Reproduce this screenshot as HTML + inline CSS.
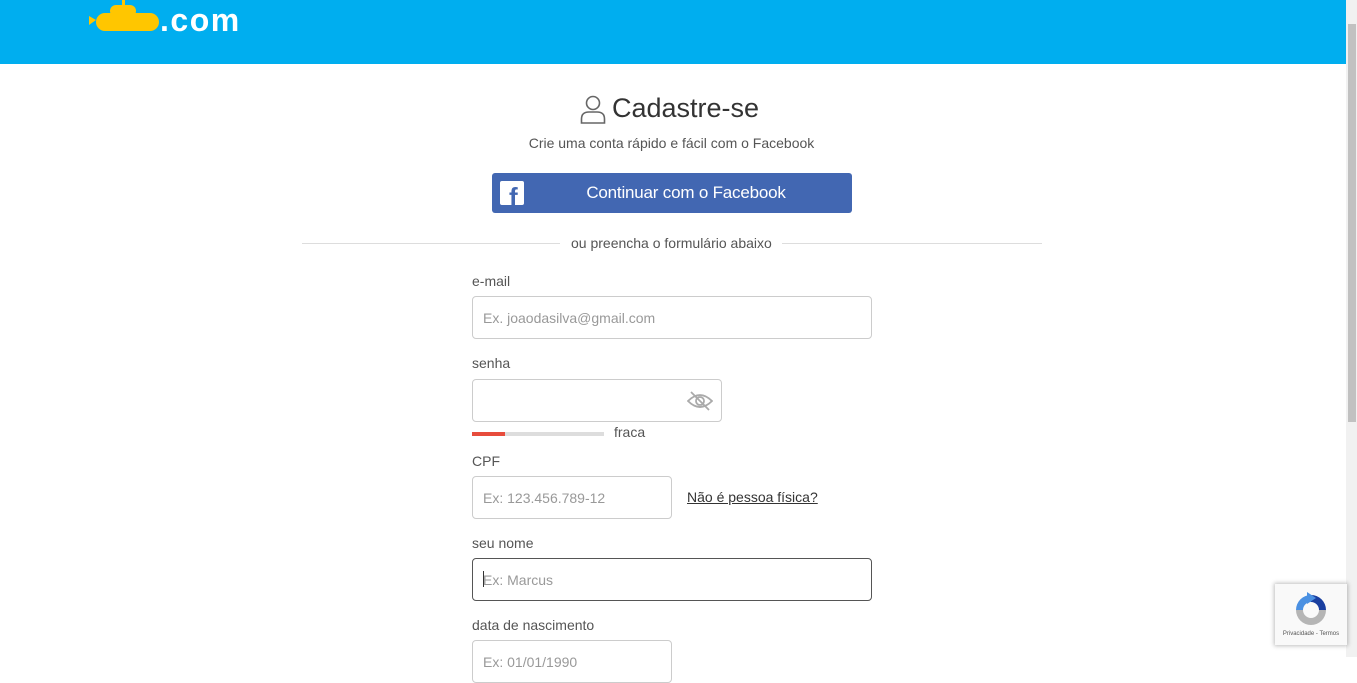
<!DOCTYPE html>
<html><head><meta charset="utf-8"><style>
*{box-sizing:border-box;margin:0;padding:0}
body{width:1357px;height:657px;overflow:hidden;background:#fff;font-family:"Liberation Sans",Arial,sans-serif;color:#555;position:relative}
.hdr{position:absolute;left:0;top:0;width:1346px;height:64px;background:#00aeef}
.sb{position:absolute;left:1346px;top:0;width:11px;height:657px;background:#f1f1f1}
.thumb{position:absolute;left:1348px;top:24px;width:8px;height:398px;background:#c1c1c1}
.abs{position:absolute}
.lbl{position:absolute;left:472px;font-size:14px;color:#555}
.inp{position:absolute;left:472px;border:1px solid #ccc;border-radius:4px;height:43px;font-size:14px;color:#999;padding:13px 10px;overflow:hidden}
</style></head><body>
<div class="hdr">
<svg class="abs" style="left:86px;top:0" width="76" height="34" viewBox="0 0 76 34">
<rect x="36" y="0" width="3" height="8" fill="#ffc600"/>
<rect x="24" y="5" width="26" height="12" rx="6" fill="#ffc600"/>
<rect x="10" y="13" width="63" height="18" rx="9" fill="#ffc600"/>
<path d="M3 16 L10 20 L3 25 Z" fill="#ffc600"/>
</svg>
<div class="abs" style="left:160px;top:1px;font-size:32px;font-weight:bold;color:#fff;line-height:38px;letter-spacing:1.5px">.com</div>
</div>
<div class="sb"></div><div class="thumb"></div>
<svg class="abs" style="left:580px;top:95px" width="26" height="29" viewBox="0 0 26 29" fill="none" stroke="#666" stroke-width="1.6"><circle cx="13" cy="8" r="6.5"/><path d="M1.5 28 V24 Q1.5 17 9 17 H17 Q24.5 17 24.5 24 V28 Z"/></svg>
<div class="abs" style="left:612px;top:93px;font-size:27px;color:#333">Cadastre-se</div>
<div class="abs" style="left:0;width:1343px;text-align:center;top:135px;font-size:14px;color:#555">Crie uma conta rápido e fácil com o Facebook</div>
<div class="abs" style="left:492px;top:173px;width:360px;height:40px;background:#4267b2;border-radius:3px">
<div class="abs" style="left:8px;top:8px;width:24px;height:24px;background:#fff;border-radius:2px;overflow:hidden"><div class="abs" style="left:9px;top:4px;font-size:26px;font-weight:bold;color:#4267b2;line-height:24px">f</div></div>
<div class="abs" style="left:0;width:388px;text-align:center;top:10px;font-size:17px;color:#fff;letter-spacing:-0.2px">Continuar com o Facebook</div>
</div>
<div class="abs" style="left:302px;top:243px;width:258px;height:1px;background:#ddd"></div>
<div class="abs" style="left:782px;top:243px;width:260px;height:1px;background:#ddd"></div>
<div class="abs" style="left:571px;top:235px;font-size:14px;color:#555">ou preencha o formulário abaixo</div>
<div class="lbl" style="top:273px">e-mail</div>
<div class="inp" style="top:296px;width:400px">Ex. joaodasilva@gmail.com</div>
<div class="lbl" style="top:355px">senha</div>
<div class="inp" style="top:379px;width:250px"></div>
<svg class="abs" style="left:687px;top:389px" width="26" height="24" viewBox="0 0 26 24" fill="none" stroke="#aaa" stroke-width="1.8"><path d="M1 12 Q13 0 25 12 Q13 24 1 12 Z"/><circle cx="13" cy="12" r="4"/><path d="M4 3 L22 21"/></svg>
<div class="abs" style="left:472px;top:432px;width:132px;height:4px;background:#ddd"></div>
<div class="abs" style="left:472px;top:432px;width:33px;height:4px;background:#e74c3c"></div>
<div class="abs" style="left:614px;top:424px;font-size:14px;color:#555">fraca</div>
<div class="lbl" style="top:453px">CPF</div>
<div class="inp" style="top:476px;width:200px">Ex: 123.456.789-12</div>
<div class="abs" style="left:687px;top:489px;font-size:14px;color:#333;text-decoration:underline">Não é pessoa física?</div>
<div class="lbl" style="top:535px">seu nome</div>
<div class="inp" style="top:558px;width:400px;border-color:#555">Ex: Marcus</div>
<div class="abs" style="left:483px;top:571px;width:1px;height:16px;background:#333"></div>
<div class="lbl" style="top:617px">data de nascimento</div>
<div class="inp" style="top:640px;width:200px">Ex: 01/01/1990</div>
<div class="abs" style="left:1275px;top:584px;width:72px;height:61px;background:#f9f9f9;box-shadow:0 0 4px 1px rgba(0,0,0,.25)">
<svg class="abs" style="left:17px;top:7px" width="38" height="38" viewBox="0 0 38 38"><path d="M19 4 A15 15 0 0 0 4 19 H11 A8 8 0 0 1 19 11 Z" fill="#4a90e2"/><path d="M19 4 A15 15 0 0 1 34 19 H27 A8 8 0 0 0 19 11 Z" fill="#1a3fa0"/><path d="M4 19 A15 15 0 0 0 34 19 H27 A8 8 0 0 1 11 19 Z" fill="#b5b5b5"/><path d="M15 1 L24 7 L15 13 Z" fill="#4a90e2"/></svg>
<div class="abs" style="left:0;width:72px;text-align:center;top:47px;font-size:6px;color:#555">Privacidade - Termos</div>
</div>
</body></html>
